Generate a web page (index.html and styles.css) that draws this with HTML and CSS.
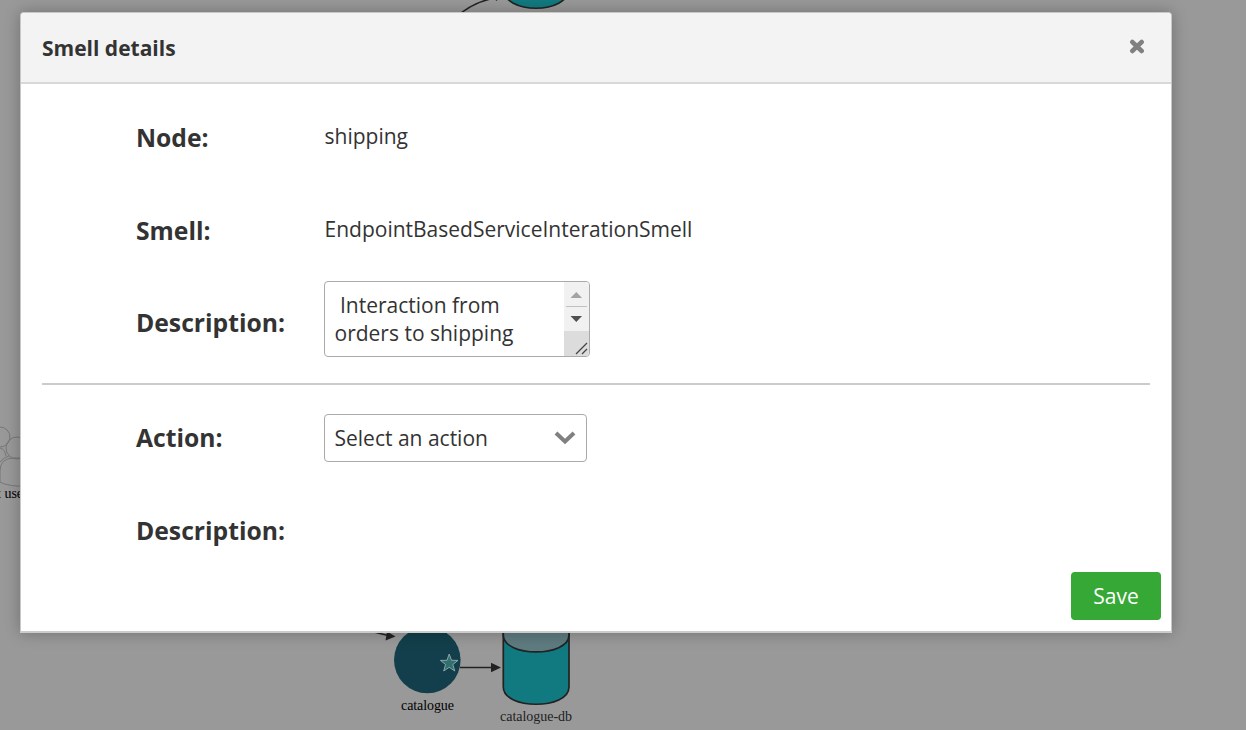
FILE: index.html
```html
<!DOCTYPE html>
<html lang="en">
<head>
<meta charset="utf-8">
<title>Smell details</title>
<link rel="stylesheet" href="styles.css">
</head>
<body>
<svg class="graph" width="1246" height="730" viewBox="0 0 1246 730">
  <g class="edge">
    <path d="M455 18Q474 1 496 -2"/>
    <path d="M366 630L388 635.500"/>
    <path d="M460 667.500H492"/>
  </g>
  <g class="arrow">
    <path d="M493.500 -2L496.500 1L499 -2Z"/>
    <path d="M387 631.500L395.500 636.500L385.500 640.500Z"/>
    <path d="M491 662.800L501 667.500L491 672.200Z"/>
  </g>
  <path class="db" d="M503 -12C503 15 569 15 569 -12Z"/>
  <circle class="service" cx="427.300" cy="660" r="33.300"/>
  <path class="star" d="M449.200 654L451.500 660.300L458 660.400L452.800 664.500L454.800 671L449.200 667.300L443.700 671L445.600 664.500L440.400 660.400L447 660.300Z"/>
  <path class="db" d="M503.300 632V687C503.300 710 569 710 569 687V632Z"/>
  <path class="db-top" d="M503.300 620V635C503.300 657.500 569 657.500 569 635V620Z"/>
  <g class="users">
    <circle cx="0" cy="437" r="10"/>
    <circle cx="17" cy="448" r="11"/>
    <path d="M0 448Q5 449 6 456M0 462Q4 457 9 456M0 482V471Q0 458 14 458H30V486Q8 487 0 482"/>
  </g>
  <text class="node-name" x="-3" y="498">t user</text>
  <text class="node-name" x="401" y="710" textLength="53">catalogue</text>
  <text class="node-name node-name-db" x="500" y="721" textLength="72">catalogue-db</text>
</svg>
<div class="overlay">
  <section class="dialog">
    <header class="dialog-header">
      <h1 class="dialog-title">Smell details</h1>
      <svg class="close" width="16" height="15" viewBox="0 0 16 15"><path d="M3.300 3L12.700 12M12.700 3L3.300 12"/></svg>
    </header>
    <div class="dialog-body">
      <div class="row"><span class="label">Node:</span><span class="value">shipping</span></div>
      <div class="row"><span class="label">Smell:</span><span class="value">EndpointBasedServiceInterationSmell</span></div>
      <div class="row">
        <span class="label">Description:</span>
        <div class="textarea">
          <div class="textarea-text">&nbsp;Interaction from<br>orders to shipping</div>
          <svg class="scrollbar" width="25" height="74" viewBox="0 0 25 74">
            <path fill="#f1f1f1" d="M0 0H25V49H0Z"/>
            <path fill="#dcdcdc" d="M0 49H25V74H0Z"/>
            <path fill="#a3a3a3" d="M6.500 16L12.300 10L18 16Z"/>
            <path fill="#c1c1c1" d="M2 24H23V25H2Z"/>
            <path fill="#505050" d="M6.500 34H18L12.300 40Z"/>
            <path stroke="#444" stroke-width="1.300" d="M12 72L23 61M18 72L23 67"/>
          </svg>
        </div>
      </div>
      <hr class="divider">
      <div class="row">
        <span class="label">Action:</span>
        <div class="select"><span>Select an action</span><svg class="chevron" width="22" height="14" viewBox="0 0 22 14"><path d="M2 2L11 10.500L20 2"/></svg></div>
      </div>
      <div class="row"><span class="label">Description:</span></div>
    </div>
    <footer class="dialog-footer"><button class="save">Save</button></footer>
  </section>
</div>
</body>
</html>
```
FILE: styles.css
```css
* { box-sizing: border-box; }
body {
  margin: 0;
  height: 730px;
  overflow: hidden;
  background: #999;
  color: #333;
  font: 21px/28px "Open Sans", sans-serif;
}
.graph { position: absolute; top: 0; left: 0; }
.edge { fill: none; stroke: #222; stroke-width: 1.5; }
.arrow { fill: #222; }
.db { fill: #117a80; stroke: #222; stroke-width: 1.7; }
.db-top { fill: #5e7b80; stroke: #222; stroke-width: 1.7; }
.service { fill: #123f4b; }
.star { fill: #307070; stroke: #8fa5a7; stroke-width: 1; }
.users { fill: none; stroke: #777; stroke-width: 1; }
.node-name { font: 14px "Liberation Serif", serif; fill: #000; }
.node-name-db { fill: #222; }
.overlay { position: relative; padding: 12px 0 0 20px; }
.dialog {
  display: flex;
  flex-direction: column;
  width: 1152px;
  height: 621px;
  background: #fff;
  border: 1px solid #c8c8c8;
  border-bottom: 2px solid #ccc;
  border-radius: 4px 4px 0 0;
  box-shadow: 0 0 16px rgba(0, 0, 0, .27);
}
.dialog-header {
  display: flex;
  flex: none;
  align-items: center;
  justify-content: space-between;
  height: 71px;
  padding: 0 26px 0 21px;
  background: #f3f3f3;
  border-bottom: 2px solid #d8dada;
  border-radius: 3px 3px 0 0;
}
.dialog-title { margin: 0; font-size: 21px; font-weight: 700; }
.close { margin-bottom: 2px; stroke: #808080; stroke-width: 4.500; stroke-linecap: round; }
.dialog-body { flex: 1 1 0; min-height: 0; padding: 8px 21px 0; }
.row {
  display: grid;
  grid-template-columns: 188px 1fr;
  align-items: center;
  height: 92.5px;
  padding-left: 94px;
}
.label { font-size: 24.7px; font-weight: 700; }
.value { padding: 0 0 4px .5px; }
.textarea {
  display: flex;
  justify-content: space-between;
  width: 266px;
  height: 76px;
  margin-top: -9px;
  border: 1px solid #aaa;
  border-radius: 4px;
  overflow: hidden;
}
.textarea-text { padding: 9px 0 0 9.5px; white-space: nowrap; }
.divider { height: 2px; margin: 13.5px 0 7px; border: 0; background: #ccc; }
.select {
  display: flex;
  align-items: center;
  justify-content: space-between;
  width: 263px;
  height: 48px;
  padding: 0 10px 0 9.5px;
  border: 1px solid #aaa;
  border-radius: 4px;
}
.chevron { fill: none; stroke: #808080; stroke-width: 4; }
.dialog-footer { display: flex; flex: none; justify-content: flex-end; height: 59px; padding: 0 10px 11px; }
.save {
  width: 90px;
  height: 48px;
  padding: 0 0 1px;
  border: 0;
  border-radius: 4px;
  background: #35a835;
  color: #fff;
  font: 21px "Open Sans", sans-serif;
}
```
